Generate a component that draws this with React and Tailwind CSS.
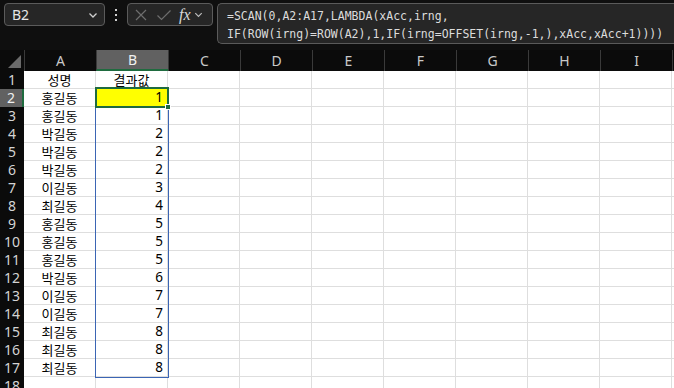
import React from "react";

const cols = ["A", "B", "C", "D", "E", "F", "G", "H", "I"];

const rows = [
  ["성명", "결과값"],
  ["홍길동", 1],
  ["홍길동", 1],
  ["박길동", 2],
  ["박길동", 2],
  ["박길동", 2],
  ["이길동", 3],
  ["최길동", 4],
  ["홍길동", 5],
  ["홍길동", 5],
  ["홍길동", 5],
  ["박길동", 6],
  ["이길동", 7],
  ["이길동", 7],
  ["최길동", 8],
  ["최길동", 8],
  ["최길동", 8],
  ["", ""],
];

const Chevron = ({ className }) => (
  <svg viewBox="0 0 12 12" className={className} fill="none" stroke="currentColor" strokeWidth="1.3">
    <path d="M2.5 4.5 L6 8 L9.5 4.5" />
  </svg>
);

// ::: formula bar ::: //
const FormulaBar = () => (
  <div className="flex h-[50px] items-start gap-[4px] bg-[#0f0f0f] pl-[4px] pt-[3px]">
    <div className="flex h-[23px] w-[101px] items-center justify-between rounded-[4px] border border-[#5b5b5b] bg-[#262626] pl-[7px] pr-[5px] text-[14px] text-[#e6e6e6]">
      <span>B2</span>
      <Chevron className="w-[12px] h-[12px] text-[#cfcfcf]" />
    </div>
    <div className="flex h-[23px] w-[14px] flex-col items-center justify-center gap-[3px]">
      <span className="h-[2px] w-[2px] bg-[#cfcfcf]" />
      <span className="h-[2px] w-[2px] bg-[#cfcfcf]" />
      <span className="h-[2px] w-[2px] bg-[#cfcfcf]" />
    </div>
    <div className="flex h-[23px] w-[86px] items-center rounded-[4px] border border-[#5b5b5b] bg-[#262626] pl-[6px] text-[#6e6e6e]">
      <svg viewBox="0 0 14 14" className="h-[14px] w-[14px]" fill="none" stroke="currentColor" strokeWidth="1.2">
        <path d="M2 2 L12 12 M12 2 L2 12" />
      </svg>
      <svg viewBox="0 0 16 14" className="ml-[8px] h-[14px] w-[16px]" fill="none" stroke="currentColor" strokeWidth="1.2">
        <path d="M1.5 7.5 L5.5 11.5 L14.5 2.5" />
      </svg>
      <span className="ml-[7px] font-['Liberation_Serif',serif] text-[16px] italic leading-none text-[#d8d8d8]">fx</span>
      <Chevron className="ml-[2px] w-[11px] h-[11px] text-[#bdbdbd]" />
    </div>
    <div className="h-[41px] flex-1 rounded-l-[5px] border border-r-0 border-[#5b5b5b] bg-[#262626] pl-[9px] pt-[3px] font-['DejaVu_Sans_Mono',monospace] text-[11.5px] leading-[18px] whitespace-nowrap text-[#dcdcdc]">
      <div>=SCAN(0,A2:A17,LAMBDA(xAcc,irng,</div>
      <div>IF(ROW(irng)=ROW(A2),1,IF(irng=OFFSET(irng,-1,),xAcc,xAcc+1))))</div>
    </div>
  </div>
);

const Sheet = () => (
  <div className="relative">
    <div className="grid grid-cols-[24px_repeat(9,72px)_1fr] font-['Noto_Sans',sans-serif]">
      {/* header row */}
      <div className="relative h-[21px] bg-[#0b0b0b]">
        <div className="absolute bottom-[3px] right-[3px] h-0 w-0 border-b-[13px] border-l-[13px] border-b-[#6a6a6a] border-l-transparent" />
      </div>
      {cols.map((c) => (
        <div
          key={c}
          className={
            c === "B"
              ? "flex h-[21px] items-center justify-center border-b-2 border-b-[#1f6b3f] border-l border-l-[#3a3a3a] bg-[#616161] text-[14px] text-[#f0f0f0]"
              : "flex h-[21px] items-center justify-center border-l border-l-[#3a3a3a] bg-[#0b0b0b] text-[14px] text-[#c9c9c9]"
          }
        >
          {c}
        </div>
      ))}
      <div className="h-[21px] border-l border-l-[#3a3a3a] bg-[#0b0b0b]" />

      {rows.map((r, i) => (
        <React.Fragment key={i}>
          <div
            className={
              i === 1
                ? "flex h-[18px] items-center justify-center border-r-2 border-r-[#1f6b3f] bg-[#616161] text-[14px] leading-none text-[#f0f0f0]"
                : "flex h-[18px] items-center justify-center bg-[#0b0b0b] text-[14px] leading-none text-[#d4d4d4]"
            }
          >
            {i + 1}
          </div>
          <div className="flex h-[18px] items-center justify-center border-b border-r border-[#dedede] bg-white font-['Noto_Sans_CJK_KR',sans-serif] text-[13px] leading-none text-black">
            {r[0]}
          </div>
          <div
            className={
              i === 0
                ? "flex h-[18px] items-center justify-center border-b border-r border-[#dedede] bg-white font-['Noto_Sans_CJK_KR',sans-serif] text-[13px] leading-none text-black"
                : i === 1
                ? "flex h-[18px] items-center justify-end border-b border-r border-[#dedede] bg-[#ffff00] pr-[4px] text-[13.5px] leading-none text-black"
                : "flex h-[18px] items-center justify-end border-b border-r border-[#dedede] bg-white pr-[4px] text-[13.5px] leading-none text-black"
            }
          >
            {r[1]}
          </div>
          {cols.slice(2).map((c) => (
            <div key={c} className="h-[18px] border-b border-r border-[#dedede] bg-white" />
          ))}
          <div className="h-[18px] border-b border-[#dedede] bg-white" />
        </React.Fragment>
      ))}
    </div>

    {/* range outline B2:B17 */}
    <div className="pointer-events-none absolute left-[95px] top-[38px] h-[290px] w-[74px] border border-[#3b65b4]" />
    {/* active cell B2 */}
    <div className="pointer-events-none absolute left-[95px] top-[37px] h-[21px] w-[74px] border-2 border-[#1f6b3f]" />
    <div className="pointer-events-none absolute left-[165px] top-[54px] h-[6px] w-[6px] border border-white bg-[#1f6b3f]" />
  </div>
);

export default function App() {
  return (
    <div className="h-[388px] w-[674px] overflow-hidden bg-[#0f0f0f] font-['Noto_Sans',sans-serif]">
      <FormulaBar />
      <Sheet />
    </div>
  );
}
